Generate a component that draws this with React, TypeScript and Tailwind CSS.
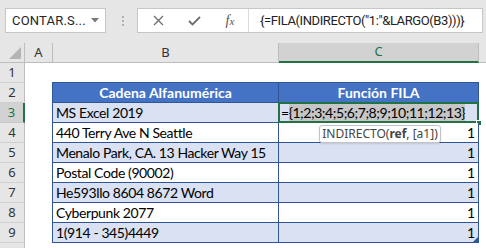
import React from 'react';

const rows = [
  { n: 4, b: '440 Terry Ave N Seattle', band: false },
  { n: 5, b: 'Menalo Park, CA. 13 Hacker Way 15', band: true },
  { n: 6, b: 'Postal Code (90002)', band: false },
  { n: 7, b: 'He593llo 8604 8672 Word', band: true },
  { n: 8, b: 'Cyberpunk 2077', band: false },
  { n: 9, b: '1(914 - 345)4449', band: true },
];

function RowHead({ n, active = false }: { n?: number; active?: boolean }) {
  return (
    <div
      className={
        active
          ? 'w-[25px] shrink-0 h-full flex items-center justify-center bg-[#d2d2d2] border-b border-b-[#c8c8c8] border-r-2 border-r-[#217346] text-[#217346] text-[13px] font-["Noto_Sans",sans-serif]'
          : 'w-[25px] shrink-0 h-full flex items-center justify-center bg-[#e6e6e6] border-b border-b-[#d0d0d0] border-r border-r-[#bdbdbd] text-[#333] text-[13px] font-["Noto_Sans",sans-serif]'
      }
    >
      {n}
    </div>
  );
}

export default function App() {
  return (
    <div className="w-[486px] h-[248px] overflow-hidden bg-white font-['Lato',sans-serif] text-black select-none">
      {/* formula bar */}
      <div className="h-[43px] bg-[#e6e6e6] flex items-start pt-[8px]">
        <div className="ml-[5px] w-[101px] h-[25px] bg-white border border-[#c6c6c6] flex items-center justify-between pl-[6px] pr-[6px]">
          <span className="text-[13px] text-[#262626] font-['Roboto',sans-serif] tracking-[0.2px]">CONTAR.S...</span>
          <svg width="8" height="5" viewBox="0 0 8 5">
            <path d="M0 0 H8 L4 4.5 Z" fill="#7a7a7a" />
          </svg>
        </div>
        <div className="ml-[15px] w-[3px] h-[25px] flex flex-col items-center justify-center gap-[2px]">
          <span className="w-[2px] h-[2px] bg-[#b0b0b0]" />
          <span className="w-[2px] h-[2px] bg-[#b0b0b0]" />
          <span className="w-[2px] h-[2px] bg-[#b0b0b0]" />
        </div>
        <div className="ml-[13px] mr-[3px] flex-1 h-[25px] bg-white border border-[#c6c6c6] flex">
          <div className="pl-[2px] flex">
            <div className="w-[36px] h-full flex items-center justify-center">
              <svg width="11" height="11" viewBox="0 0 11 11">
                <path d="M1 1 L10 10 M10 1 L1 10" stroke="#6e6e6e" strokeWidth="1.3" />
              </svg>
            </div>
            <div className="w-[36px] h-full flex items-center justify-center">
              <svg width="13" height="10" viewBox="0 0 13 10">
                <path d="M1 5 L4.5 8.5 L12 1" stroke="#6e6e6e" strokeWidth="1.8" fill="none" />
              </svg>
            </div>
            <div className="w-[36px] h-full flex items-center justify-center">
              <span className="font-['Liberation_Serif',serif] italic text-[14px] text-[#555] leading-none">
                f<span className="text-[11px]">x</span>
              </span>
            </div>
          </div>
          <div className="flex-1 border-l border-[#dcdcdc] flex items-center pl-[11px] text-[13px] tracking-[-0.4px] text-[#222] font-['Roboto',sans-serif] whitespace-nowrap">
            {'{=FILA(INDIRECTO("1:"&LARGO(B3)))}'}
          </div>
        </div>
      </div>

      {/* column headers */}
      <div className="h-[20px] flex bg-[#e6e6e6] text-[13px] text-[#333] font-['Noto_Sans',sans-serif]">
        <div className="w-[25px] shrink-0 border-r border-b border-[#bdbdbd] flex items-end justify-end pr-[3px] pb-[3px]">
          <svg width="12" height="12" viewBox="0 0 12 12">
            <path d="M12 0 V12 H0 Z" fill="#b4b4b4" />
          </svg>
        </div>
        <div className="w-[28px] shrink-0 border-r border-b border-[#bdbdbd] flex items-center justify-center">A</div>
        <div className="w-[226px] shrink-0 border-r border-b border-[#bdbdbd] flex items-center justify-center">B</div>
        <div className="w-[200px] shrink-0 bg-[#d2d2d2] border-r border-r-[#bdbdbd] border-b-2 border-b-[#217346] flex items-center justify-center text-[#217346]">C</div>
        <div className="flex-1 border-b border-[#bdbdbd]" />
      </div>

      {/* row 1 */}
      <div className="h-[20px] flex">
        <RowHead n={1} />
        <div className="w-[27px] shrink-0" />
        <div className="w-[427px] shrink-0 border-b border-[#2f5597]" />
        <div className="flex-1" />
      </div>

      {/* row 2 - table header */}
      <div className="h-[20px] flex">
        <RowHead n={2} />
        <div className="w-[27px] shrink-0" />
        <div className="w-[226px] shrink-0 bg-[#4472c4] border-l border-b border-[#2f5597] flex items-center justify-center text-white font-bold text-[14px]">
          Cadena Alfanumérica
        </div>
        <div className="w-[201px] shrink-0 bg-[#4472c4] border-l border-r border-b border-[#2f5597] flex items-center justify-center text-white font-bold text-[14px]">
          Función FILA
        </div>
        <div className="flex-1" />
      </div>

      {/* row 3 - editing */}
      <div className="h-[20px] flex">
        <RowHead n={3} active />
        <div className="w-[27px] shrink-0" />
        <div className="w-[226px] shrink-0 bg-[#d9e1f2] border-l border-b border-[#2f5597] flex items-center pl-[3px] text-[14px] tracking-[-0.4px] whitespace-nowrap">
          MS Excel 2019
        </div>
        <div className="relative w-[201px] shrink-0 bg-[#d9e1f2] border-l border-r border-b border-[#2f5597] flex items-center pl-[2px] text-[14px] tracking-[-0.45px] whitespace-nowrap">
          <span>=</span>
          <span className="bg-[#c6c6c6] h-[17px] flex items-center">{'{1;2;3;4;5;6;7;8;9;10;11;12;13}'}</span>
          <div className="absolute -left-[1px] -top-[1px] -right-[1px] -bottom-[1px] border-2 border-[#217346]" />
          <div className="absolute -right-[4px] -bottom-[4px] w-[6px] h-[6px] bg-[#217346] border border-white" />
          <div className="absolute left-[40px] top-[22px] z-10 w-[122px] h-[18px] bg-white border border-[#c3c3c3] rounded-[3px] shadow-[0_1px_2px_rgba(0,0,0,0.12)] flex items-center justify-center text-[12px] tracking-normal text-[#444] font-['Noto_Sans',sans-serif]">
            INDIRECTO(<span className="font-bold">ref</span>, [a1])
          </div>
        </div>
        <div className="flex-1" />
      </div>

      {rows.map((r) => (
        <div key={r.n} className="h-[20px] flex">
          <RowHead n={r.n} />
          <div className="w-[27px] shrink-0" />
          <div
            className={
              (r.band ? 'bg-[#d9e1f2] ' : 'bg-white ') +
              'w-[226px] shrink-0 border-l border-b border-[#2f5597] flex items-center pl-[3px] text-[14px] tracking-[-0.4px] whitespace-nowrap overflow-hidden'
            }
          >
            {r.b}
          </div>
          <div
            className={
              (r.band ? 'bg-[#d9e1f2] ' : 'bg-white ') +
              'relative w-[201px] shrink-0 border-l border-r border-b border-[#2f5597] flex items-center justify-end pr-[3px] text-[14px]'
            }
          >
            1
            {r.n === 9 && (
              <svg className="absolute right-0 bottom-0" width="5" height="5" viewBox="0 0 5 5">
                <path d="M5 0 V5 H0 Z" fill="#2f5597" />
              </svg>
            )}
          </div>
          <div className="flex-1" />
        </div>
      ))}

      {/* row 10 (partial, label out of view) */}
      <div className="h-[20px] flex">
        <RowHead />
        <div className="flex-1" />
      </div>
    </div>
  );
}
